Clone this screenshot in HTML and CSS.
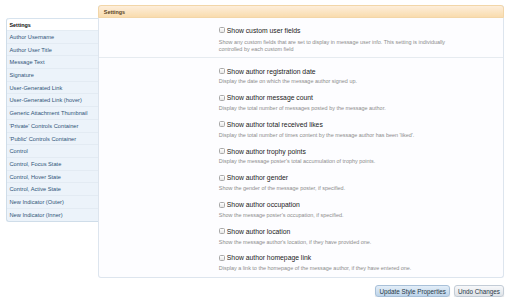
FILE: index.html
```html
<!DOCTYPE html>
<html lang="en">
<head>
  <meta charset="UTF-8">
  <title>Style Properties: Message Elements</title>
  <link rel="stylesheet" href="styles.css">
</head>
<body>
  <div class="page">
    <ul class="side-tabs">
      <li class="side-head">Settings</li>
      <li>Author Username</li>
      <li>Author User Title</li>
      <li>Message Text</li>
      <li>Signature</li>
      <li>User-Generated Link</li>
      <li>User-Generated Link (hover)</li>
      <li>Generic Attachment Thumbnail</li>
      <li>'Private' Controls Container</li>
      <li>'Public' Controls Container</li>
      <li>Control</li>
      <li>Control, Focus State</li>
      <li>Control, Hover State</li>
      <li>Control, Active State</li>
      <li>New Indicator (Outer)</li>
      <li>New Indicator (Inner)</li>
    </ul>

    <div class="main-col">
      <div class="panel">
        <div class="panel-head">Settings</div>

        <div class="group first">
          <div class="option">
            <label><input type="checkbox"> Show custom user fields</label>
            <p class="hint">Show any custom fields that are set to display in message user info. This setting is individually controlled by each custom field</p>
          </div>
        </div>

        <div class="group">
          <div class="option">
            <label><input type="checkbox"> Show author registration date</label>
            <p class="hint">Display the date on which the message author signed up.</p>
          </div>
          <div class="option">
            <label><input type="checkbox"> Show author message count</label>
            <p class="hint">Display the total number of messages posted by the message author.</p>
          </div>
          <div class="option">
            <label><input type="checkbox"> Show author total received likes</label>
            <p class="hint">Display the total number of times content by the message author has been 'liked'.</p>
          </div>
          <div class="option">
            <label><input type="checkbox"> Show author trophy points</label>
            <p class="hint">Display the message poster's total accumulation of trophy points.</p>
          </div>
          <div class="option">
            <label><input type="checkbox"> Show author gender</label>
            <p class="hint">Show the gender of the message poster, if specified.</p>
          </div>
          <div class="option">
            <label><input type="checkbox"> Show author occupation</label>
            <p class="hint">Show the message poster's occupation, if specified.</p>
          </div>
          <div class="option">
            <label><input type="checkbox"> Show author location</label>
            <p class="hint">Show the message author's location, if they have provided one.</p>
          </div>
          <div class="option">
            <label><input type="checkbox"> Show author homepage link</label>
            <p class="hint">Display a link to the homepage of the message author, if they have entered one.</p>
          </div>
        </div>
      </div>

      <div class="actions">
        <button class="btn primary">Update Style Properties</button>
        <button class="btn">Undo Changes</button>
      </div>
    </div>
  </div>
</body>
</html>
```

FILE: styles.css
```css
body {
  margin: 0;
  background: #fff;
  font-family: 'Liberation Sans', Arial, sans-serif;
  color: #222;
}
.page {
  display: flex;
  align-items: flex-start;
  padding: 5px 5px 0 6px;
}
.side-tabs {
  list-style: none;
  margin: 13px 0 0 0;
  padding: 0;
  width: 91px;
  background: #ecf3fa;
  border: 1px solid #cfdde9;
  border-top: none;
  border-right: none;
  border-radius: 3px 0 0 3px;
  font-size: 5.7px;
}
.side-tabs li {
  height: 12.7px;
  line-height: 12.7px;
  padding-left: 2.5px;
  color: #2f5378;
  border-bottom: 1px solid #e3ebf3;
  box-sizing: border-box;
  white-space: nowrap;
}
.side-tabs li:last-child {
  border-bottom: none;
}
.side-tabs .side-head {
  background: #fff;
  color: #111;
  font-weight: bold;
  font-size: 5.4px;
  height: 13px;
  line-height: 12px;
  border-top: 1px solid #d7e3ee;
  border-radius: 3px 0 0 0;
  border-bottom: 1px solid #e4ecf3;
}
.main-col {
  width: 407px;
}
.panel {
  background: #fdfdff;
  border: 1px solid #dde5ee;
  border-top: none;
  border-radius: 3px;
  padding-bottom: 4.4px;
}
.panel-head {
  height: 13px;
  line-height: 13px;
  box-sizing: border-box;
  padding-left: 5px;
  margin: 0 -1px;
  font-size: 5.4px;
  font-weight: bold;
  color: #5a4424;
  background: linear-gradient(#fdeedb, #f9dcae);
  border: 1px solid #f2d6a8;
  border-radius: 3px 3px 0 0;
}
.group {
  display: flex;
  flex-direction: column;
  gap: 7px;
  padding: 8px 0 0 120px;
}
.group.first {
  padding: 7px 0 3.2px 120px;
  border-bottom: 1px solid #e6ebf0;
}
.option label {
  display: flex;
  align-items: center;
  gap: 2px;
  height: 10px;
  font-size: 6.8px;
  color: #222;
}
.option input {
  appearance: none;
  margin: 0;
  width: 6px;
  height: 6px;
  border: 1px solid #a9a9a9;
  border-radius: 1.5px;
  background: linear-gradient(#fff, #e6e6e6);
  box-sizing: border-box;
}
.hint {
  margin: 2.3px 0 0 0;
  font-size: 5.45px;
  line-height: 7.4px;
  color: #8c8c8c;
  padding-right: 42px;
}
.group.first .hint {
  margin-top: 4px;
}
.actions {
  display: flex;
  justify-content: flex-end;
  gap: 4px;
  margin-top: 7px;
}
.btn {
  height: 12px;
  padding: 0 3px;
  font-family: 'Liberation Sans', Arial, sans-serif;
  font-size: 6.3px;
  color: #263747;
  border: 1px solid #c3ccd6;
  border-radius: 3px;
  background: linear-gradient(#f7f8fa, #dfe3e8);
  box-shadow: 0 1px 1px rgba(0, 0, 0, 0.15);
}
.btn.primary {
  background: linear-gradient(#e3eef8, #bdd4ea);
  border-color: #a8c0d8;
}
```
